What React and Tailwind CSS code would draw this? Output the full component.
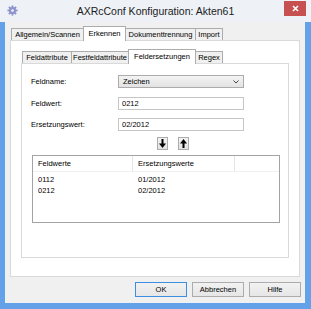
import React from 'react';

function Gear() {
  const teeth = [0, 45, 90, 135, 180, 225, 270, 315];
  return (
    <svg width="11" height="11" viewBox="0 0 12 12">
      {teeth.map((a) => (
        <rect key={a} x="5" y="0.5" width="2" height="3" fill="#8d92cf" transform={`rotate(${a} 6 6)`} />
      ))}
      <circle cx="6" cy="6" r="3.8" fill="#8d92cf" />
      <circle cx="6" cy="6" r="1.5" fill="#eef2f7" />
    </svg>
  );
}

function Arrow({ up }) {
  return (
    <svg width="7" height="9" viewBox="0 0 7 9" className={up ? 'rotate-180' : ''}>
      <rect x="2.5" y="0" width="2" height="5" fill="#000" />
      <polygon points="0,4.5 7,4.5 3.5,9" fill="#000" />
    </svg>
  );
}

const tab = 'border border-b-0 border-[#acacac] flex items-center justify-center';

export default function App() {
  return (
    <div className="w-[311px] h-[309px] bg-[#63a1e9] flex flex-col font-['Liberation_Sans',Arial,sans-serif] text-[7.5px] leading-none text-black">
      {/* title bar */}
      <div className="h-[22px] relative flex items-center justify-center bg-[#eef2f7]">
        <div className="absolute left-[7px] top-[5px]">
          <Gear />
        </div>
        <span className="text-[10.5px] text-[#1b1b1b]">AXRcConf Konfiguration: Akten61</span>
        <div className="absolute left-[284px] top-[1px] w-[22px] h-[15px] bg-[#c75050] flex items-center justify-center">
          <svg width="7" height="7" viewBox="0 0 7 7">
            <path d="M1 1 L6 6 M6 1 L1 6" stroke="#fff" strokeWidth="1.6" />
          </svg>
        </div>
      </div>

      {/* client area */}
      <div className="ml-[5px] mr-[6px] h-[281px] bg-[#f0f0f0] flex flex-col">
        {/* outer tabs */}
        <div className="mt-[4px] ml-[6px] h-[14px] flex items-end">
          <div className={`${tab} w-[73px] h-[12px]`}>Allgemein/Scannen</div>
          <div className={`${tab} w-[43px] h-[15px] -mb-px -ml-px bg-white relative z-10`}>Erkennen</div>
          <div className={`${tab} w-[71px] h-[12px] -ml-px`}>Dokumenttrennung</div>
          <div className={`${tab} w-[28px] h-[12px] -ml-px`}>Import</div>
        </div>

        {/* outer panel */}
        <div className="ml-[5px] w-[290px] h-[237px] border border-[#d9d9d9] bg-white pt-[8px] px-[10px]">
          {/* inner tabs */}
          <div className="ml-[1px] h-[14px] flex items-end">
            <div className={`${tab} w-[50px] h-[12px] bg-[#f0f0f0]`}>Feldattribute</div>
            <div className={`${tab} w-[58px] h-[12px] -ml-px bg-[#f0f0f0]`}>Festfeldattribute</div>
            <div className={`${tab} w-[68px] h-[15px] -mb-px -ml-px bg-white relative z-10`}>Feldersetzungen</div>
            <div className={`${tab} w-[28px] h-[12px] -ml-px bg-[#f0f0f0]`}>Regex</div>
          </div>

          {/* inner panel */}
          <div className="w-[268px] h-[195px] border border-[#d9d9d9] bg-white flex flex-col">
            <div className="mt-[11px] flex items-center">
              <span className="w-[96px] pl-[9px]">Feldname:</span>
              <div className="w-[126px] h-[13px] border border-[#acacac] bg-gradient-to-b from-[#f3f3f3] to-[#e3e3e3] flex items-center justify-between pl-[4px] pr-[4px]">
                <span>Zeichen</span>
                <svg width="6" height="4" viewBox="0 0 6 4">
                  <path d="M0.5 0.5 L3 3 L5.5 0.5" stroke="#444" strokeWidth="1" fill="none" />
                </svg>
              </div>
            </div>
            <div className="mt-[9px] flex items-center">
              <span className="w-[96px] pl-[9px]">Feldwert:</span>
              <div className="w-[126px] h-[13px] border border-[#c6c6c6] bg-white flex items-center pl-[3px]">0212</div>
            </div>
            <div className="mt-[8px] flex items-center">
              <span className="w-[96px] pl-[9px]">Ersetzungswert:</span>
              <div className="w-[126px] h-[13px] border border-[#c6c6c6] bg-white flex items-center pl-[3px]">02/2012</div>
            </div>
            <div className="mt-[6px] ml-[135px] flex gap-[10px]">
              <div className="w-[11px] h-[13px] border border-[#acacac] bg-gradient-to-b from-[#f3f3f3] to-[#e3e3e3] flex items-center justify-center">
                <Arrow />
              </div>
              <div className="w-[11px] h-[13px] border border-[#acacac] bg-gradient-to-b from-[#f3f3f3] to-[#e3e3e3] flex items-center justify-center">
                <Arrow up />
              </div>
            </div>

            {/* list view */}
            <div className="mt-[5px] ml-[10px] w-[248px] h-[68px] border border-[#a3a3a3] bg-white flex flex-col">
              <div className="h-[16px] flex border-b border-[#f0f0f0]">
                <div className="w-[100px] border-r border-[#e5e5e5] flex items-center pl-[5px]">Feldwerte</div>
                <div className="w-[102px] border-r border-[#e5e5e5] flex items-center pl-[5px]">Ersetzungswerte</div>
                <div className="flex-1" />
              </div>
              <div className="pt-[2px] flex flex-col">
                <div className="h-[11px] flex items-center">
                  <span className="w-[100px] pl-[5px]">0112</span>
                  <span className="pl-[5px]">01/2012</span>
                </div>
                <div className="h-[11px] flex items-center">
                  <span className="w-[100px] pl-[5px]">0212</span>
                  <span className="pl-[5px]">02/2012</span>
                </div>
              </div>
            </div>
          </div>
        </div>

        {/* buttons */}
        <div className="mt-[5px] mr-[4px] flex justify-end gap-[5px]">
          <div className="w-[52px] h-[15px] border border-[#3c8fe0] bg-gradient-to-b from-[#f2f2f2] to-[#e6e6e6] flex items-center justify-center">OK</div>
          <div className="w-[52px] h-[15px] border border-[#acacac] bg-gradient-to-b from-[#f2f2f2] to-[#e6e6e6] flex items-center justify-center">Abbrechen</div>
          <div className="w-[52px] h-[15px] border border-[#acacac] bg-gradient-to-b from-[#f2f2f2] to-[#e6e6e6] flex items-center justify-center">Hilfe</div>
        </div>
      </div>
    </div>
  );
}
